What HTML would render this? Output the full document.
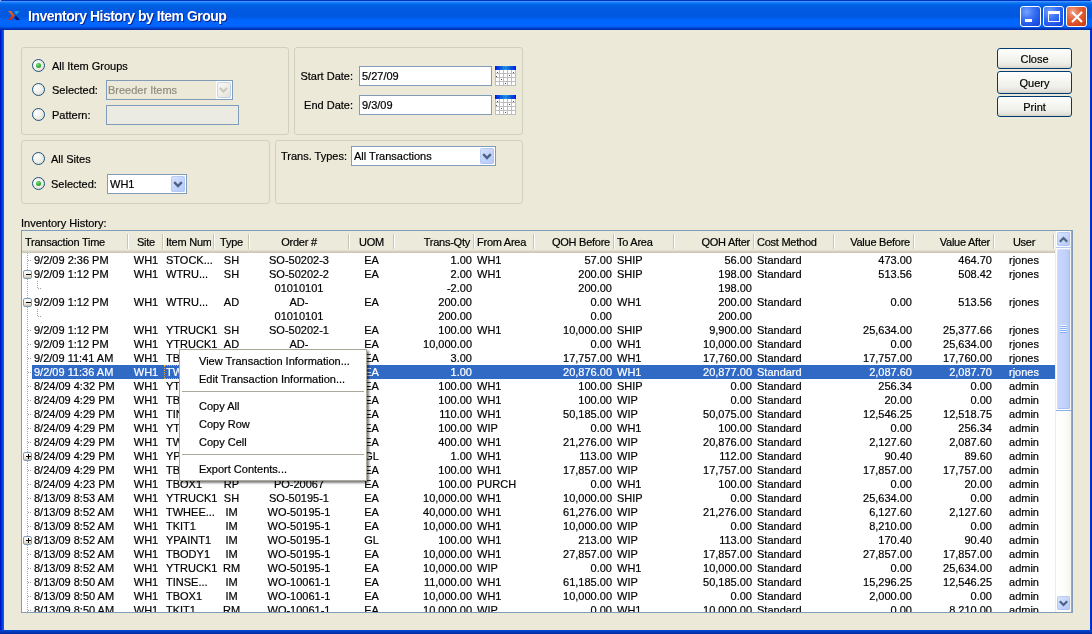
<!DOCTYPE html>
<html><head><meta charset="utf-8">
<style>
*{box-sizing:border-box}
html,body{margin:0;padding:0}
body{width:1092px;height:634px;overflow:hidden;position:relative;background:#ECE9D8;font-family:"Liberation Sans",sans-serif;font-size:11px;color:#000}
#root{-webkit-text-stroke:0.2px currentColor}
#ttl{-webkit-text-stroke:0}
.a{position:absolute}
#title{position:absolute;left:0;top:0;width:1092px;height:30px;
 background:linear-gradient(to bottom,#0032C4 0,#0032C4 1px,#3D95FF 1px,#3D95FF 2px,#2385FF 2px,#0C72F4 3px,#0062E6 5px,#005AE0 9px,#0058E0 17px,#0062F4 19px,#0066FF 21px,#0066FF 26px,#0058EC 27px,#0046D2 28px,#0034B4 29px,#002C9E 30px);
 border-radius:2px 2px 0 0}
#ttl{position:absolute;left:28px;top:6px;font-weight:bold;font-size:14px;letter-spacing:-0.5px;color:#fff;text-shadow:1px 1px 0 #0A1E8C;line-height:20px;white-space:nowrap}
.lb{position:absolute;left:0;top:30px;width:4px;height:604px;background:linear-gradient(to right,#0014C4 0,#0014C4 1px,#002ED8 1px,#002ED8 2px,#0044E6 2px,#0044E6 3px,#0A5CF0 3px,#0A5CF0 4px)}
.rb{position:absolute;left:1090px;top:30px;width:2px;height:604px;background:linear-gradient(to right,#0034DC 0,#0034DC 1px,#0026B4 1px,#0026B4 2px)}
.bb{position:absolute;left:0;top:630px;width:1092px;height:4px;background:linear-gradient(to bottom,#0046D5,#0040C8 1px,#0032B0 3px,#00218A 4px)}
.tbtn{position:absolute;top:6px;width:21px;height:21px;border:1px solid #fff;border-radius:3px;
 background:radial-gradient(circle at 30% 25%,#78A2FF 0,#3E76F6 35%,#2055E8 70%,#1744D0 100%)}
.tbtn.x{background:radial-gradient(circle at 30% 25%,#F0A88F 0,#E4673F 35%,#D84A1F 70%,#C8380E 100%)}
.grp{position:absolute;border:1px solid #D0D0BF;border-radius:3px}
.rad{position:absolute;width:13px;height:13px;border-radius:50%;border:1px solid #1C5180;background:radial-gradient(circle at 35% 35%,#FFFFFF 0,#F0F0EA 45%,#D8D6CC 100%)}
.rad.on::after{content:"";position:absolute;left:3px;top:3px;width:5px;height:5px;border-radius:50%;background:radial-gradient(circle at 40% 35%,#7EE27E 0,#2FB02F 50%,#1E901E 100%)}
.t{position:absolute;white-space:nowrap;line-height:14px}
.fld{position:absolute;border:1px solid #7F9DB9;background:#fff}
.cbtn{position:absolute;width:15px;height:17px;border-radius:2px;background:linear-gradient(135deg,#D8E3FD 0,#C6D5FC 45%,#B3CAF8 100%);box-shadow:inset 0 0 0 1px rgba(170,195,240,0.6)}
.cbtn svg{position:absolute;left:2px;top:5px}
.btn{position:absolute;left:997px;width:75px;height:22px;border:1px solid #003C74;border-radius:3px;
 background:linear-gradient(to bottom,#FFFFFF 0,#F8F8F4 30%,#F0F0EA 70%,#E3E2DA 90%,#D6D0C5 100%);text-align:center;line-height:20px;padding-top:1px}
#tbl{position:absolute;left:21px;top:230px;width:1052px;height:383px;border:1px solid #7F9DB9;background:#fff;overflow:hidden}
#hdr{position:absolute;left:22px;top:231px;width:1033px;height:22px;background:linear-gradient(to bottom,#EBEADB 0,#EBEADB 19px,#E2DECD 19px,#E2DECD 20px,#D6D2C2 20px,#D6D2C2 21px,#CBC7B8 21px,#CBC7B8 22px)}
.hc{position:absolute;top:235px;height:14px;line-height:14px;white-space:nowrap;overflow:hidden;padding:0 4px;letter-spacing:-0.25px}
.hs{position:absolute;top:234px;width:2px;height:15px;border-left:1px solid #C7C5B2;border-right:1px solid #fff}
.c{position:absolute;height:14px;line-height:14px;white-space:nowrap;overflow:hidden;padding:0 2px 0 3px}
.l{text-align:left}.r{text-align:right}.m{text-align:center}
.hc.m,.c.m{padding:0 2px}
.hc.r{text-align:right;padding:0 4px 0 2px}
.hc.l{text-align:left;padding-left:3px}
.w{color:#fff}
.sel{position:absolute;left:32px;width:1023px;height:14px;background:#316AC5}
.th{position:absolute;height:1px;background-image:linear-gradient(to right,#A0A0A0 50%,transparent 50%);background-size:2px 1px}
.tv{position:absolute;width:1px;background-image:linear-gradient(to bottom,#A0A0A0 50%,transparent 50%);background-size:1px 2px}
.eb{position:absolute;width:9px;height:9px;border:1px solid #7F9DB9;border-radius:2px;background:linear-gradient(to bottom,#fff 0,#F6F5EF 40%,#E6E2D6 75%,#C8BFA8 100%)}
#sb{position:absolute;left:1055px;top:231px;width:16px;height:381px;background:linear-gradient(to right,#EEEDE5 0,#EEEDE5 1px,#FFFFFF 1px,#FDFDFA 60%,#F5F4EE 100%)}
.sbb{position:absolute;left:1057px;width:13px;height:14px;border-radius:2px;background:linear-gradient(135deg,#DDE7FE 0,#C8D7FC 45%,#B2C8F7 100%);box-shadow:inset 0 0 0 1px rgba(160,185,235,0.5)}
#thumb{position:absolute;left:1057px;top:249px;width:13px;height:160px;border-radius:2px;background:linear-gradient(to right,#C9D6FB 0,#C6D4FB 40%,#BDD0FB 75%,#B0C6F7 100%);box-shadow:inset 1px 1px 0 #D3DEFC,inset -1px -1px 0 #A9C0F2}
#menu{position:absolute;left:179px;top:349px;width:188px;height:132px;background:#fff;border:1px solid #ACA899;box-shadow:2px 2px 2px rgba(0,0,0,0.5)}
.mi{position:absolute;left:199px;margin-top:-1px;line-height:14px;white-space:nowrap}
.msep{position:absolute;left:182px;width:182px;height:1px;background:#ACA899}
</style></head><body><div id="root" style="position:absolute;left:0;top:0;width:1092px;height:634px;will-change:transform">
<div id="title"></div>
<svg class="a" style="left:0;top:0" width="24" height="24" viewBox="0 0 24 24">
 <defs><linearGradient id="og" x1="0" y1="0" x2="0" y2="1"><stop offset="0" stop-color="#DE7226"/><stop offset="1" stop-color="#CC2012"/></linearGradient></defs>
 <path d="M8 11 L11.2 11 L15 15.5 L11.2 20 L8 20 L11.8 15.5 Z" fill="url(#og)"/>
 <path d="M15 11 L19.6 11 L16.4 14.6 L14.6 12.8 Z" fill="#1AA2DA"/>
 <path d="M14.2 17.8 L16 15.8 L20 20 L16 20 Z" fill="#06166E"/>
</svg>
<div id="ttl">Inventory History by Item Group</div>
<div class="tbtn" style="left:1020px"><div class="a" style="left:4px;top:12px;width:7px;height:3px;background:#fff"></div></div>
<div class="tbtn" style="left:1043px"><div class="a" style="left:4px;top:4px;width:12px;height:11px;border:1px solid #fff;border-top-width:3px"></div></div>
<div class="tbtn x" style="left:1066px"><svg class="a" style="left:3.5px;top:3.5px" width="12" height="12"><path d="M1 1 L11 11 M11 1 L1 11" stroke="#fff" stroke-width="2.2"/></svg></div>
<div class="lb"></div><div class="rb"></div><div class="bb"></div>

<!-- group 1 -->
<div class="grp" style="left:21px;top:47px;width:268px;height:88px"></div>
<div class="rad on" style="left:32px;top:59px"></div>
<div class="t" style="left:52px;top:59px">All Item Groups</div>
<div class="rad" style="left:32px;top:83px"></div>
<div class="t" style="left:52px;top:83px">Selected:</div>
<div class="fld" style="left:106px;top:80px;width:127px;height:20px;background:#ECE9D8"></div>
<div class="t" style="left:108px;top:83px;color:#8F8D80">Breeder Items</div>
<div class="a" style="left:216px;top:81px;width:16px;height:18px;background:#fff"></div>
<div class="cbtn" style="left:217px;top:82px;width:14px;height:16px;background:linear-gradient(135deg,#F8F8F5,#ECEBE4 60%,#E2E0D8);"><svg width="9" height="6" viewBox="0 0 9 6"><path d="M1 1 L4.5 4.5 L8 1" stroke="#C9C7BA" stroke-width="2" fill="none"/></svg></div>
<div class="rad" style="left:32px;top:108px"></div>
<div class="t" style="left:52px;top:108px">Pattern:</div>
<div class="fld" style="left:106px;top:105px;width:133px;height:20px;background:#EBEBE4"></div>

<!-- group 2 -->
<div class="grp" style="left:294px;top:47px;width:229px;height:88px"></div>
<div class="t" style="left:299px;top:69px;width:54px;text-align:right">Start Date:</div>
<div class="fld" style="left:359px;top:66px;width:133px;height:20px"></div>
<div class="t" style="left:362px;top:69px">5/27/09</div>
<svg class="a" style="left:495px;top:66px" width="21" height="20" viewBox="0 0 21 20">
 <defs><linearGradient id="cg1" x1="0" y1="0" x2="1" y2="0"><stop offset="0" stop-color="#0018E8"/><stop offset="0.5" stop-color="#1FA0E6"/><stop offset="1" stop-color="#0018E8"/></linearGradient></defs>
 <rect x="0" y="0" width="21" height="4" fill="url(#cg1)"/>
 <path d="M3 2 H18" stroke="#0A2A8A" stroke-width="1" stroke-dasharray="2 1" opacity="0.5"/>
 <rect x="0" y="4" width="21" height="16" fill="#fff"/>
 <g stroke="#BDBDBD" stroke-width="1">
  <path d="M0.5 4 V20 M4.5 4 V20 M8.5 4 V20 M12.5 4 V20 M16.5 4 V20 M20.5 4 V20"/>
  <path d="M0 7.5 H21 M0 11.5 H21 M0 15.5 H21 M0 19.5 H21"/>
 </g>
 <g fill="#555"><rect x="2" y="6" width="1" height="1"/><rect x="18" y="6" width="1" height="1"/><rect x="1" y="10" width="1" height="1"/><rect x="14" y="9" width="1" height="1"/><rect x="6" y="13" width="1" height="1"/><rect x="10" y="17" width="1" height="1"/></g>
</svg>
<div class="t" style="left:299px;top:98px;width:54px;text-align:right">End Date:</div>
<div class="fld" style="left:359px;top:95px;width:133px;height:20px"></div>
<div class="t" style="left:362px;top:98px">9/3/09</div>
<svg class="a" style="left:495px;top:95px" width="21" height="20" viewBox="0 0 21 20">
 <defs><linearGradient id="cg2" x1="0" y1="0" x2="1" y2="0"><stop offset="0" stop-color="#0018E8"/><stop offset="0.5" stop-color="#1FA0E6"/><stop offset="1" stop-color="#0018E8"/></linearGradient></defs>
 <rect x="0" y="0" width="21" height="4" fill="url(#cg2)"/>
 <path d="M3 2 H18" stroke="#0A2A8A" stroke-width="1" stroke-dasharray="2 1" opacity="0.5"/>
 <rect x="0" y="4" width="21" height="16" fill="#fff"/>
 <g stroke="#BDBDBD" stroke-width="1">
  <path d="M0.5 4 V20 M4.5 4 V20 M8.5 4 V20 M12.5 4 V20 M16.5 4 V20 M20.5 4 V20"/>
  <path d="M0 7.5 H21 M0 11.5 H21 M0 15.5 H21 M0 19.5 H21"/>
 </g>
 <g fill="#555"><rect x="2" y="6" width="1" height="1"/><rect x="18" y="6" width="1" height="1"/><rect x="1" y="10" width="1" height="1"/><rect x="14" y="9" width="1" height="1"/><rect x="6" y="13" width="1" height="1"/><rect x="10" y="17" width="1" height="1"/></g>
</svg>

<!-- group 3 -->
<div class="grp" style="left:21px;top:140px;width:249px;height:64px"></div>
<div class="rad" style="left:32px;top:152px"></div>
<div class="t" style="left:51px;top:152px">All Sites</div>
<div class="rad on" style="left:32px;top:177px"></div>
<div class="t" style="left:51px;top:177px">Selected:</div>
<div class="fld" style="left:107px;top:174px;width:80px;height:20px"></div>
<div class="t" style="left:110px;top:177px">WH1</div>
<div class="cbtn" style="left:171px;top:176px;width:14px;height:16px"><svg width="10" height="7" viewBox="0 0 10 7"><path d="M1.2 1.2 L5 5 L8.8 1.2" stroke="#4D6185" stroke-width="2.4" fill="none"/></svg></div>

<!-- group 4 -->
<div class="grp" style="left:275px;top:140px;width:248px;height:64px"></div>
<div class="t" style="left:281px;top:149px">Trans. Types:</div>
<div class="fld" style="left:351px;top:146px;width:145px;height:20px"></div>
<div class="t" style="left:354px;top:149px">All Transactions</div>
<div class="cbtn" style="left:480px;top:148px;width:14px;height:16px"><svg width="10" height="7" viewBox="0 0 10 7"><path d="M1.2 1.2 L5 5 L8.8 1.2" stroke="#4D6185" stroke-width="2.4" fill="none"/></svg></div>

<!-- buttons -->
<div class="btn" style="top:48px;height:21px;line-height:19px">Close</div>
<div class="btn" style="top:71px;height:23px;line-height:21px">Query</div>
<div class="btn" style="top:96px;height:21px;line-height:19px">Print</div>

<div class="t" style="left:21px;top:216px">Inventory History:</div>

<div id="tbl"></div>
<div id="hdr"></div>
<div class="hc l" style="left:22px;width:107px">Transaction Time</div>
<div class="hs" style="left:127px"></div>
<div class="hc m" style="left:129px;width:34px">Site</div>
<div class="hs" style="left:162px"></div>
<div class="hc l" style="left:163px;width:48px">Item Num</div>
<div class="hs" style="left:213px"></div>
<div class="hc m" style="left:214px;width:35px">Type</div>
<div class="hs" style="left:248px"></div>
<div class="hc m" style="left:249px;width:100px">Order #</div>
<div class="hs" style="left:348px"></div>
<div class="hc m" style="left:349px;width:45px">UOM</div>
<div class="hs" style="left:393px"></div>
<div class="hc r" style="left:394px;width:80px">Trans-Qty</div>
<div class="hs" style="left:473px"></div>
<div class="hc l" style="left:474px;width:60px">From Area</div>
<div class="hs" style="left:533px"></div>
<div class="hc r" style="left:534px;width:80px">QOH Before</div>
<div class="hs" style="left:613px"></div>
<div class="hc l" style="left:614px;width:60px">To Area</div>
<div class="hs" style="left:673px"></div>
<div class="hc r" style="left:674px;width:80px">QOH After</div>
<div class="hs" style="left:753px"></div>
<div class="hc l" style="left:754px;width:80px">Cost Method</div>
<div class="hs" style="left:833px"></div>
<div class="hc r" style="left:834px;width:80px">Value Before</div>
<div class="hs" style="left:913px"></div>
<div class="hc r" style="left:914px;width:80px">Value After</div>
<div class="hs" style="left:993px"></div>
<div class="hc m" style="left:994px;width:60px">User</div>
<div class="hs" style="left:1053px"></div>
<div class="a" style="left:0;top:0;width:1092px;height:612px;overflow:hidden">
<div class="tv" style="left:27px;top:253px;height:359px"></div>
<div class="c l" style="left:34px;top:253px;width:95px;padding:0">9/2/09 2:36 PM</div>
<div class="c m" style="left:129px;top:253px;width:34px">WH1</div>
<div class="c l" style="left:163px;top:253px;width:51px;padding-right:0;overflow:visible">STOCK...</div>
<div class="c m" style="left:214px;top:253px;width:35px">SH</div>
<div class="c m" style="left:249px;top:253px;width:100px">SO-50202-3</div>
<div class="c m" style="left:349px;top:253px;width:45px">EA</div>
<div class="c r" style="left:394px;top:253px;width:80px">1.00</div>
<div class="c l" style="left:474px;top:253px;width:60px">WH1</div>
<div class="c r" style="left:534px;top:253px;width:80px">57.00</div>
<div class="c l" style="left:614px;top:253px;width:60px">SHIP</div>
<div class="c r" style="left:674px;top:253px;width:80px">56.00</div>
<div class="c l" style="left:754px;top:253px;width:80px">Standard</div>
<div class="c r" style="left:834px;top:253px;width:80px">473.00</div>
<div class="c r" style="left:914px;top:253px;width:80px">464.70</div>
<div class="c m" style="left:994px;top:253px;width:60px">rjones</div>
<div class="th" style="left:28px;top:260px;width:4px"></div>
<div class="c l" style="left:34px;top:267px;width:95px;padding:0">9/2/09 1:12 PM</div>
<div class="c m" style="left:129px;top:267px;width:34px">WH1</div>
<div class="c l" style="left:163px;top:267px;width:51px;padding-right:0;overflow:visible">WTRU...</div>
<div class="c m" style="left:214px;top:267px;width:35px">SH</div>
<div class="c m" style="left:249px;top:267px;width:100px">SO-50202-2</div>
<div class="c m" style="left:349px;top:267px;width:45px">EA</div>
<div class="c r" style="left:394px;top:267px;width:80px">2.00</div>
<div class="c l" style="left:474px;top:267px;width:60px">WH1</div>
<div class="c r" style="left:534px;top:267px;width:80px">200.00</div>
<div class="c l" style="left:614px;top:267px;width:60px">SHIP</div>
<div class="c r" style="left:674px;top:267px;width:80px">198.00</div>
<div class="c l" style="left:754px;top:267px;width:80px">Standard</div>
<div class="c r" style="left:834px;top:267px;width:80px">513.56</div>
<div class="c r" style="left:914px;top:267px;width:80px">508.42</div>
<div class="c m" style="left:994px;top:267px;width:60px">rjones</div>
<div class="eb" style="left:23px;top:270px"><div class="a" style="left:2px;top:3px;width:5px;height:1px;background:#000"></div></div>
<div class="c m" style="left:249px;top:281px;width:100px">01010101</div>
<div class="c r" style="left:394px;top:281px;width:80px">-2.00</div>
<div class="c r" style="left:534px;top:281px;width:80px">200.00</div>
<div class="c r" style="left:674px;top:281px;width:80px">198.00</div>
<div class="tv" style="left:37px;top:281px;height:7px"></div>
<div class="th" style="left:38px;top:288px;width:4px"></div>
<div class="c l" style="left:34px;top:295px;width:95px;padding:0">9/2/09 1:12 PM</div>
<div class="c m" style="left:129px;top:295px;width:34px">WH1</div>
<div class="c l" style="left:163px;top:295px;width:51px;padding-right:0;overflow:visible">WTRU...</div>
<div class="c m" style="left:214px;top:295px;width:35px">AD</div>
<div class="c m" style="left:249px;top:295px;width:100px">AD-</div>
<div class="c m" style="left:349px;top:295px;width:45px">EA</div>
<div class="c r" style="left:394px;top:295px;width:80px">200.00</div>
<div class="c r" style="left:534px;top:295px;width:80px">0.00</div>
<div class="c l" style="left:614px;top:295px;width:60px">WH1</div>
<div class="c r" style="left:674px;top:295px;width:80px">200.00</div>
<div class="c l" style="left:754px;top:295px;width:80px">Standard</div>
<div class="c r" style="left:834px;top:295px;width:80px">0.00</div>
<div class="c r" style="left:914px;top:295px;width:80px">513.56</div>
<div class="c m" style="left:994px;top:295px;width:60px">rjones</div>
<div class="eb" style="left:23px;top:298px"><div class="a" style="left:2px;top:3px;width:5px;height:1px;background:#000"></div></div>
<div class="c m" style="left:249px;top:309px;width:100px">01010101</div>
<div class="c r" style="left:394px;top:309px;width:80px">200.00</div>
<div class="c r" style="left:534px;top:309px;width:80px">0.00</div>
<div class="c r" style="left:674px;top:309px;width:80px">200.00</div>
<div class="tv" style="left:37px;top:309px;height:7px"></div>
<div class="th" style="left:38px;top:316px;width:4px"></div>
<div class="c l" style="left:34px;top:323px;width:95px;padding:0">9/2/09 1:12 PM</div>
<div class="c m" style="left:129px;top:323px;width:34px">WH1</div>
<div class="c l" style="left:163px;top:323px;width:51px;padding-right:0;overflow:visible">YTRUCK1</div>
<div class="c m" style="left:214px;top:323px;width:35px">SH</div>
<div class="c m" style="left:249px;top:323px;width:100px">SO-50202-1</div>
<div class="c m" style="left:349px;top:323px;width:45px">EA</div>
<div class="c r" style="left:394px;top:323px;width:80px">100.00</div>
<div class="c l" style="left:474px;top:323px;width:60px">WH1</div>
<div class="c r" style="left:534px;top:323px;width:80px">10,000.00</div>
<div class="c l" style="left:614px;top:323px;width:60px">SHIP</div>
<div class="c r" style="left:674px;top:323px;width:80px">9,900.00</div>
<div class="c l" style="left:754px;top:323px;width:80px">Standard</div>
<div class="c r" style="left:834px;top:323px;width:80px">25,634.00</div>
<div class="c r" style="left:914px;top:323px;width:80px">25,377.66</div>
<div class="c m" style="left:994px;top:323px;width:60px">rjones</div>
<div class="th" style="left:28px;top:330px;width:4px"></div>
<div class="c l" style="left:34px;top:337px;width:95px;padding:0">9/2/09 1:12 PM</div>
<div class="c m" style="left:129px;top:337px;width:34px">WH1</div>
<div class="c l" style="left:163px;top:337px;width:51px;padding-right:0;overflow:visible">YTRUCK1</div>
<div class="c m" style="left:214px;top:337px;width:35px">AD</div>
<div class="c m" style="left:249px;top:337px;width:100px">AD-</div>
<div class="c m" style="left:349px;top:337px;width:45px">EA</div>
<div class="c r" style="left:394px;top:337px;width:80px">10,000.00</div>
<div class="c r" style="left:534px;top:337px;width:80px">0.00</div>
<div class="c l" style="left:614px;top:337px;width:60px">WH1</div>
<div class="c r" style="left:674px;top:337px;width:80px">10,000.00</div>
<div class="c l" style="left:754px;top:337px;width:80px">Standard</div>
<div class="c r" style="left:834px;top:337px;width:80px">0.00</div>
<div class="c r" style="left:914px;top:337px;width:80px">25,634.00</div>
<div class="c m" style="left:994px;top:337px;width:60px">rjones</div>
<div class="th" style="left:28px;top:344px;width:4px"></div>
<div class="c l" style="left:34px;top:351px;width:95px;padding:0">9/2/09 11:41 AM</div>
<div class="c m" style="left:129px;top:351px;width:34px">WH1</div>
<div class="c l" style="left:163px;top:351px;width:51px;padding-right:0;overflow:visible">TBOX1</div>
<div class="c m" style="left:214px;top:351px;width:35px">AD</div>
<div class="c m" style="left:249px;top:351px;width:100px">AD-</div>
<div class="c m" style="left:349px;top:351px;width:45px">EA</div>
<div class="c r" style="left:394px;top:351px;width:80px">3.00</div>
<div class="c r" style="left:534px;top:351px;width:80px">17,757.00</div>
<div class="c l" style="left:614px;top:351px;width:60px">WH1</div>
<div class="c r" style="left:674px;top:351px;width:80px">17,760.00</div>
<div class="c l" style="left:754px;top:351px;width:80px">Standard</div>
<div class="c r" style="left:834px;top:351px;width:80px">17,757.00</div>
<div class="c r" style="left:914px;top:351px;width:80px">17,760.00</div>
<div class="c m" style="left:994px;top:351px;width:60px">rjones</div>
<div class="th" style="left:28px;top:358px;width:4px"></div>
<div class="sel" style="top:365px"></div>
<div class="c l w" style="left:34px;top:365px;width:95px;padding:0">9/2/09 11:36 AM</div>
<div class="c m w" style="left:129px;top:365px;width:34px">WH1</div>
<div class="c l w" style="left:163px;top:365px;width:51px;padding-right:0;overflow:visible">TWHEE...</div>
<div class="c m w" style="left:214px;top:365px;width:35px">AD</div>
<div class="c m w" style="left:249px;top:365px;width:100px">AD-</div>
<div class="c m w" style="left:349px;top:365px;width:45px">EA</div>
<div class="c r w" style="left:394px;top:365px;width:80px">1.00</div>
<div class="c r w" style="left:534px;top:365px;width:80px">20,876.00</div>
<div class="c l w" style="left:614px;top:365px;width:60px">WH1</div>
<div class="c r w" style="left:674px;top:365px;width:80px">20,877.00</div>
<div class="c l w" style="left:754px;top:365px;width:80px">Standard</div>
<div class="c r w" style="left:834px;top:365px;width:80px">2,087.60</div>
<div class="c r w" style="left:914px;top:365px;width:80px">2,087.70</div>
<div class="c m w" style="left:994px;top:365px;width:60px">rjones</div>
<div class="th" style="left:28px;top:372px;width:4px"></div>
<div class="c l" style="left:34px;top:379px;width:95px;padding:0">8/24/09 4:32 PM</div>
<div class="c m" style="left:129px;top:379px;width:34px">WH1</div>
<div class="c l" style="left:163px;top:379px;width:51px;padding-right:0;overflow:visible">YTRUCK1</div>
<div class="c m" style="left:214px;top:379px;width:35px">SH</div>
<div class="c m" style="left:249px;top:379px;width:100px">SO-50196-1</div>
<div class="c m" style="left:349px;top:379px;width:45px">EA</div>
<div class="c r" style="left:394px;top:379px;width:80px">100.00</div>
<div class="c l" style="left:474px;top:379px;width:60px">WH1</div>
<div class="c r" style="left:534px;top:379px;width:80px">100.00</div>
<div class="c l" style="left:614px;top:379px;width:60px">SHIP</div>
<div class="c r" style="left:674px;top:379px;width:80px">0.00</div>
<div class="c l" style="left:754px;top:379px;width:80px">Standard</div>
<div class="c r" style="left:834px;top:379px;width:80px">256.34</div>
<div class="c r" style="left:914px;top:379px;width:80px">0.00</div>
<div class="c m" style="left:994px;top:379px;width:60px">admin</div>
<div class="th" style="left:28px;top:386px;width:4px"></div>
<div class="c l" style="left:34px;top:393px;width:95px;padding:0">8/24/09 4:29 PM</div>
<div class="c m" style="left:129px;top:393px;width:34px">WH1</div>
<div class="c l" style="left:163px;top:393px;width:51px;padding-right:0;overflow:visible">TBOX1</div>
<div class="c m" style="left:214px;top:393px;width:35px">IM</div>
<div class="c m" style="left:249px;top:393px;width:100px">WO-50196-1</div>
<div class="c m" style="left:349px;top:393px;width:45px">EA</div>
<div class="c r" style="left:394px;top:393px;width:80px">100.00</div>
<div class="c l" style="left:474px;top:393px;width:60px">WH1</div>
<div class="c r" style="left:534px;top:393px;width:80px">100.00</div>
<div class="c l" style="left:614px;top:393px;width:60px">WIP</div>
<div class="c r" style="left:674px;top:393px;width:80px">0.00</div>
<div class="c l" style="left:754px;top:393px;width:80px">Standard</div>
<div class="c r" style="left:834px;top:393px;width:80px">20.00</div>
<div class="c r" style="left:914px;top:393px;width:80px">0.00</div>
<div class="c m" style="left:994px;top:393px;width:60px">admin</div>
<div class="th" style="left:28px;top:400px;width:4px"></div>
<div class="c l" style="left:34px;top:407px;width:95px;padding:0">8/24/09 4:29 PM</div>
<div class="c m" style="left:129px;top:407px;width:34px">WH1</div>
<div class="c l" style="left:163px;top:407px;width:51px;padding-right:0;overflow:visible">TINSE...</div>
<div class="c m" style="left:214px;top:407px;width:35px">IM</div>
<div class="c m" style="left:249px;top:407px;width:100px">WO-50196-1</div>
<div class="c m" style="left:349px;top:407px;width:45px">EA</div>
<div class="c r" style="left:394px;top:407px;width:80px">110.00</div>
<div class="c l" style="left:474px;top:407px;width:60px">WH1</div>
<div class="c r" style="left:534px;top:407px;width:80px">50,185.00</div>
<div class="c l" style="left:614px;top:407px;width:60px">WIP</div>
<div class="c r" style="left:674px;top:407px;width:80px">50,075.00</div>
<div class="c l" style="left:754px;top:407px;width:80px">Standard</div>
<div class="c r" style="left:834px;top:407px;width:80px">12,546.25</div>
<div class="c r" style="left:914px;top:407px;width:80px">12,518.75</div>
<div class="c m" style="left:994px;top:407px;width:60px">admin</div>
<div class="th" style="left:28px;top:414px;width:4px"></div>
<div class="c l" style="left:34px;top:421px;width:95px;padding:0">8/24/09 4:29 PM</div>
<div class="c m" style="left:129px;top:421px;width:34px">WH1</div>
<div class="c l" style="left:163px;top:421px;width:51px;padding-right:0;overflow:visible">YTRUCK1</div>
<div class="c m" style="left:214px;top:421px;width:35px">RM</div>
<div class="c m" style="left:249px;top:421px;width:100px">WO-50196-1</div>
<div class="c m" style="left:349px;top:421px;width:45px">EA</div>
<div class="c r" style="left:394px;top:421px;width:80px">100.00</div>
<div class="c l" style="left:474px;top:421px;width:60px">WIP</div>
<div class="c r" style="left:534px;top:421px;width:80px">0.00</div>
<div class="c l" style="left:614px;top:421px;width:60px">WH1</div>
<div class="c r" style="left:674px;top:421px;width:80px">100.00</div>
<div class="c l" style="left:754px;top:421px;width:80px">Standard</div>
<div class="c r" style="left:834px;top:421px;width:80px">0.00</div>
<div class="c r" style="left:914px;top:421px;width:80px">256.34</div>
<div class="c m" style="left:994px;top:421px;width:60px">admin</div>
<div class="th" style="left:28px;top:428px;width:4px"></div>
<div class="c l" style="left:34px;top:435px;width:95px;padding:0">8/24/09 4:29 PM</div>
<div class="c m" style="left:129px;top:435px;width:34px">WH1</div>
<div class="c l" style="left:163px;top:435px;width:51px;padding-right:0;overflow:visible">TWHEE...</div>
<div class="c m" style="left:214px;top:435px;width:35px">IM</div>
<div class="c m" style="left:249px;top:435px;width:100px">WO-50196-1</div>
<div class="c m" style="left:349px;top:435px;width:45px">EA</div>
<div class="c r" style="left:394px;top:435px;width:80px">400.00</div>
<div class="c l" style="left:474px;top:435px;width:60px">WH1</div>
<div class="c r" style="left:534px;top:435px;width:80px">21,276.00</div>
<div class="c l" style="left:614px;top:435px;width:60px">WIP</div>
<div class="c r" style="left:674px;top:435px;width:80px">20,876.00</div>
<div class="c l" style="left:754px;top:435px;width:80px">Standard</div>
<div class="c r" style="left:834px;top:435px;width:80px">2,127.60</div>
<div class="c r" style="left:914px;top:435px;width:80px">2,087.60</div>
<div class="c m" style="left:994px;top:435px;width:60px">admin</div>
<div class="th" style="left:28px;top:442px;width:4px"></div>
<div class="c l" style="left:34px;top:449px;width:95px;padding:0">8/24/09 4:29 PM</div>
<div class="c m" style="left:129px;top:449px;width:34px">WH1</div>
<div class="c l" style="left:163px;top:449px;width:51px;padding-right:0;overflow:visible">YPAINT1</div>
<div class="c m" style="left:214px;top:449px;width:35px">IM</div>
<div class="c m" style="left:249px;top:449px;width:100px">WO-50196-1</div>
<div class="c m" style="left:349px;top:449px;width:45px">GL</div>
<div class="c r" style="left:394px;top:449px;width:80px">1.00</div>
<div class="c l" style="left:474px;top:449px;width:60px">WH1</div>
<div class="c r" style="left:534px;top:449px;width:80px">113.00</div>
<div class="c l" style="left:614px;top:449px;width:60px">WIP</div>
<div class="c r" style="left:674px;top:449px;width:80px">112.00</div>
<div class="c l" style="left:754px;top:449px;width:80px">Standard</div>
<div class="c r" style="left:834px;top:449px;width:80px">90.40</div>
<div class="c r" style="left:914px;top:449px;width:80px">89.60</div>
<div class="c m" style="left:994px;top:449px;width:60px">admin</div>
<div class="eb" style="left:23px;top:452px"><div class="a" style="left:2px;top:3px;width:5px;height:1px;background:#000"></div><div class="a" style="left:4px;top:1px;width:1px;height:5px;background:#000"></div></div>
<div class="c l" style="left:34px;top:463px;width:95px;padding:0">8/24/09 4:29 PM</div>
<div class="c m" style="left:129px;top:463px;width:34px">WH1</div>
<div class="c l" style="left:163px;top:463px;width:51px;padding-right:0;overflow:visible">TBODY1</div>
<div class="c m" style="left:214px;top:463px;width:35px">IM</div>
<div class="c m" style="left:249px;top:463px;width:100px">WO-50196-1</div>
<div class="c m" style="left:349px;top:463px;width:45px">EA</div>
<div class="c r" style="left:394px;top:463px;width:80px">100.00</div>
<div class="c l" style="left:474px;top:463px;width:60px">WH1</div>
<div class="c r" style="left:534px;top:463px;width:80px">17,857.00</div>
<div class="c l" style="left:614px;top:463px;width:60px">WIP</div>
<div class="c r" style="left:674px;top:463px;width:80px">17,757.00</div>
<div class="c l" style="left:754px;top:463px;width:80px">Standard</div>
<div class="c r" style="left:834px;top:463px;width:80px">17,857.00</div>
<div class="c r" style="left:914px;top:463px;width:80px">17,757.00</div>
<div class="c m" style="left:994px;top:463px;width:60px">admin</div>
<div class="th" style="left:28px;top:470px;width:4px"></div>
<div class="c l" style="left:34px;top:477px;width:95px;padding:0">8/24/09 4:23 PM</div>
<div class="c m" style="left:129px;top:477px;width:34px">WH1</div>
<div class="c l" style="left:163px;top:477px;width:51px;padding-right:0;overflow:visible">TBOX1</div>
<div class="c m" style="left:214px;top:477px;width:35px">RP</div>
<div class="c m" style="left:249px;top:477px;width:100px">PO-20067</div>
<div class="c m" style="left:349px;top:477px;width:45px">EA</div>
<div class="c r" style="left:394px;top:477px;width:80px">100.00</div>
<div class="c l" style="left:474px;top:477px;width:60px">PURCH</div>
<div class="c r" style="left:534px;top:477px;width:80px">0.00</div>
<div class="c l" style="left:614px;top:477px;width:60px">WH1</div>
<div class="c r" style="left:674px;top:477px;width:80px">100.00</div>
<div class="c l" style="left:754px;top:477px;width:80px">Standard</div>
<div class="c r" style="left:834px;top:477px;width:80px">0.00</div>
<div class="c r" style="left:914px;top:477px;width:80px">20.00</div>
<div class="c m" style="left:994px;top:477px;width:60px">admin</div>
<div class="th" style="left:28px;top:484px;width:4px"></div>
<div class="c l" style="left:34px;top:491px;width:95px;padding:0">8/13/09 8:53 AM</div>
<div class="c m" style="left:129px;top:491px;width:34px">WH1</div>
<div class="c l" style="left:163px;top:491px;width:51px;padding-right:0;overflow:visible">YTRUCK1</div>
<div class="c m" style="left:214px;top:491px;width:35px">SH</div>
<div class="c m" style="left:249px;top:491px;width:100px">SO-50195-1</div>
<div class="c m" style="left:349px;top:491px;width:45px">EA</div>
<div class="c r" style="left:394px;top:491px;width:80px">10,000.00</div>
<div class="c l" style="left:474px;top:491px;width:60px">WH1</div>
<div class="c r" style="left:534px;top:491px;width:80px">10,000.00</div>
<div class="c l" style="left:614px;top:491px;width:60px">SHIP</div>
<div class="c r" style="left:674px;top:491px;width:80px">0.00</div>
<div class="c l" style="left:754px;top:491px;width:80px">Standard</div>
<div class="c r" style="left:834px;top:491px;width:80px">25,634.00</div>
<div class="c r" style="left:914px;top:491px;width:80px">0.00</div>
<div class="c m" style="left:994px;top:491px;width:60px">admin</div>
<div class="th" style="left:28px;top:498px;width:4px"></div>
<div class="c l" style="left:34px;top:505px;width:95px;padding:0">8/13/09 8:52 AM</div>
<div class="c m" style="left:129px;top:505px;width:34px">WH1</div>
<div class="c l" style="left:163px;top:505px;width:51px;padding-right:0;overflow:visible">TWHEE...</div>
<div class="c m" style="left:214px;top:505px;width:35px">IM</div>
<div class="c m" style="left:249px;top:505px;width:100px">WO-50195-1</div>
<div class="c m" style="left:349px;top:505px;width:45px">EA</div>
<div class="c r" style="left:394px;top:505px;width:80px">40,000.00</div>
<div class="c l" style="left:474px;top:505px;width:60px">WH1</div>
<div class="c r" style="left:534px;top:505px;width:80px">61,276.00</div>
<div class="c l" style="left:614px;top:505px;width:60px">WIP</div>
<div class="c r" style="left:674px;top:505px;width:80px">21,276.00</div>
<div class="c l" style="left:754px;top:505px;width:80px">Standard</div>
<div class="c r" style="left:834px;top:505px;width:80px">6,127.60</div>
<div class="c r" style="left:914px;top:505px;width:80px">2,127.60</div>
<div class="c m" style="left:994px;top:505px;width:60px">admin</div>
<div class="th" style="left:28px;top:512px;width:4px"></div>
<div class="c l" style="left:34px;top:519px;width:95px;padding:0">8/13/09 8:52 AM</div>
<div class="c m" style="left:129px;top:519px;width:34px">WH1</div>
<div class="c l" style="left:163px;top:519px;width:51px;padding-right:0;overflow:visible">TKIT1</div>
<div class="c m" style="left:214px;top:519px;width:35px">IM</div>
<div class="c m" style="left:249px;top:519px;width:100px">WO-50195-1</div>
<div class="c m" style="left:349px;top:519px;width:45px">EA</div>
<div class="c r" style="left:394px;top:519px;width:80px">10,000.00</div>
<div class="c l" style="left:474px;top:519px;width:60px">WH1</div>
<div class="c r" style="left:534px;top:519px;width:80px">10,000.00</div>
<div class="c l" style="left:614px;top:519px;width:60px">WIP</div>
<div class="c r" style="left:674px;top:519px;width:80px">0.00</div>
<div class="c l" style="left:754px;top:519px;width:80px">Standard</div>
<div class="c r" style="left:834px;top:519px;width:80px">8,210.00</div>
<div class="c r" style="left:914px;top:519px;width:80px">0.00</div>
<div class="c m" style="left:994px;top:519px;width:60px">admin</div>
<div class="th" style="left:28px;top:526px;width:4px"></div>
<div class="c l" style="left:34px;top:533px;width:95px;padding:0">8/13/09 8:52 AM</div>
<div class="c m" style="left:129px;top:533px;width:34px">WH1</div>
<div class="c l" style="left:163px;top:533px;width:51px;padding-right:0;overflow:visible">YPAINT1</div>
<div class="c m" style="left:214px;top:533px;width:35px">IM</div>
<div class="c m" style="left:249px;top:533px;width:100px">WO-50195-1</div>
<div class="c m" style="left:349px;top:533px;width:45px">GL</div>
<div class="c r" style="left:394px;top:533px;width:80px">100.00</div>
<div class="c l" style="left:474px;top:533px;width:60px">WH1</div>
<div class="c r" style="left:534px;top:533px;width:80px">213.00</div>
<div class="c l" style="left:614px;top:533px;width:60px">WIP</div>
<div class="c r" style="left:674px;top:533px;width:80px">113.00</div>
<div class="c l" style="left:754px;top:533px;width:80px">Standard</div>
<div class="c r" style="left:834px;top:533px;width:80px">170.40</div>
<div class="c r" style="left:914px;top:533px;width:80px">90.40</div>
<div class="c m" style="left:994px;top:533px;width:60px">admin</div>
<div class="eb" style="left:23px;top:536px"><div class="a" style="left:2px;top:3px;width:5px;height:1px;background:#000"></div><div class="a" style="left:4px;top:1px;width:1px;height:5px;background:#000"></div></div>
<div class="c l" style="left:34px;top:547px;width:95px;padding:0">8/13/09 8:52 AM</div>
<div class="c m" style="left:129px;top:547px;width:34px">WH1</div>
<div class="c l" style="left:163px;top:547px;width:51px;padding-right:0;overflow:visible">TBODY1</div>
<div class="c m" style="left:214px;top:547px;width:35px">IM</div>
<div class="c m" style="left:249px;top:547px;width:100px">WO-50195-1</div>
<div class="c m" style="left:349px;top:547px;width:45px">EA</div>
<div class="c r" style="left:394px;top:547px;width:80px">10,000.00</div>
<div class="c l" style="left:474px;top:547px;width:60px">WH1</div>
<div class="c r" style="left:534px;top:547px;width:80px">27,857.00</div>
<div class="c l" style="left:614px;top:547px;width:60px">WIP</div>
<div class="c r" style="left:674px;top:547px;width:80px">17,857.00</div>
<div class="c l" style="left:754px;top:547px;width:80px">Standard</div>
<div class="c r" style="left:834px;top:547px;width:80px">27,857.00</div>
<div class="c r" style="left:914px;top:547px;width:80px">17,857.00</div>
<div class="c m" style="left:994px;top:547px;width:60px">admin</div>
<div class="th" style="left:28px;top:554px;width:4px"></div>
<div class="c l" style="left:34px;top:561px;width:95px;padding:0">8/13/09 8:52 AM</div>
<div class="c m" style="left:129px;top:561px;width:34px">WH1</div>
<div class="c l" style="left:163px;top:561px;width:51px;padding-right:0;overflow:visible">YTRUCK1</div>
<div class="c m" style="left:214px;top:561px;width:35px">RM</div>
<div class="c m" style="left:249px;top:561px;width:100px">WO-50195-1</div>
<div class="c m" style="left:349px;top:561px;width:45px">EA</div>
<div class="c r" style="left:394px;top:561px;width:80px">10,000.00</div>
<div class="c l" style="left:474px;top:561px;width:60px">WIP</div>
<div class="c r" style="left:534px;top:561px;width:80px">0.00</div>
<div class="c l" style="left:614px;top:561px;width:60px">WH1</div>
<div class="c r" style="left:674px;top:561px;width:80px">10,000.00</div>
<div class="c l" style="left:754px;top:561px;width:80px">Standard</div>
<div class="c r" style="left:834px;top:561px;width:80px">0.00</div>
<div class="c r" style="left:914px;top:561px;width:80px">25,634.00</div>
<div class="c m" style="left:994px;top:561px;width:60px">admin</div>
<div class="th" style="left:28px;top:568px;width:4px"></div>
<div class="c l" style="left:34px;top:575px;width:95px;padding:0">8/13/09 8:50 AM</div>
<div class="c m" style="left:129px;top:575px;width:34px">WH1</div>
<div class="c l" style="left:163px;top:575px;width:51px;padding-right:0;overflow:visible">TINSE...</div>
<div class="c m" style="left:214px;top:575px;width:35px">IM</div>
<div class="c m" style="left:249px;top:575px;width:100px">WO-10061-1</div>
<div class="c m" style="left:349px;top:575px;width:45px">EA</div>
<div class="c r" style="left:394px;top:575px;width:80px">11,000.00</div>
<div class="c l" style="left:474px;top:575px;width:60px">WH1</div>
<div class="c r" style="left:534px;top:575px;width:80px">61,185.00</div>
<div class="c l" style="left:614px;top:575px;width:60px">WIP</div>
<div class="c r" style="left:674px;top:575px;width:80px">50,185.00</div>
<div class="c l" style="left:754px;top:575px;width:80px">Standard</div>
<div class="c r" style="left:834px;top:575px;width:80px">15,296.25</div>
<div class="c r" style="left:914px;top:575px;width:80px">12,546.25</div>
<div class="c m" style="left:994px;top:575px;width:60px">admin</div>
<div class="th" style="left:28px;top:582px;width:4px"></div>
<div class="c l" style="left:34px;top:589px;width:95px;padding:0">8/13/09 8:50 AM</div>
<div class="c m" style="left:129px;top:589px;width:34px">WH1</div>
<div class="c l" style="left:163px;top:589px;width:51px;padding-right:0;overflow:visible">TBOX1</div>
<div class="c m" style="left:214px;top:589px;width:35px">IM</div>
<div class="c m" style="left:249px;top:589px;width:100px">WO-10061-1</div>
<div class="c m" style="left:349px;top:589px;width:45px">EA</div>
<div class="c r" style="left:394px;top:589px;width:80px">10,000.00</div>
<div class="c l" style="left:474px;top:589px;width:60px">WH1</div>
<div class="c r" style="left:534px;top:589px;width:80px">10,000.00</div>
<div class="c l" style="left:614px;top:589px;width:60px">WIP</div>
<div class="c r" style="left:674px;top:589px;width:80px">0.00</div>
<div class="c l" style="left:754px;top:589px;width:80px">Standard</div>
<div class="c r" style="left:834px;top:589px;width:80px">2,000.00</div>
<div class="c r" style="left:914px;top:589px;width:80px">0.00</div>
<div class="c m" style="left:994px;top:589px;width:60px">admin</div>
<div class="th" style="left:28px;top:596px;width:4px"></div>
<div class="c l" style="left:34px;top:603px;width:95px;padding:0">8/13/09 8:50 AM</div>
<div class="c m" style="left:129px;top:603px;width:34px">WH1</div>
<div class="c l" style="left:163px;top:603px;width:51px;padding-right:0;overflow:visible">TKIT1</div>
<div class="c m" style="left:214px;top:603px;width:35px">RM</div>
<div class="c m" style="left:249px;top:603px;width:100px">WO-10061-1</div>
<div class="c m" style="left:349px;top:603px;width:45px">EA</div>
<div class="c r" style="left:394px;top:603px;width:80px">10,000.00</div>
<div class="c l" style="left:474px;top:603px;width:60px">WIP</div>
<div class="c r" style="left:534px;top:603px;width:80px">0.00</div>
<div class="c l" style="left:614px;top:603px;width:60px">WH1</div>
<div class="c r" style="left:674px;top:603px;width:80px">10,000.00</div>
<div class="c l" style="left:754px;top:603px;width:80px">Standard</div>
<div class="c r" style="left:834px;top:603px;width:80px">0.00</div>
<div class="c r" style="left:914px;top:603px;width:80px">8,210.00</div>
<div class="c m" style="left:994px;top:603px;width:60px">admin</div>
<div class="th" style="left:28px;top:610px;width:4px"></div>
<div class="a" style="left:164px;top:365px;width:50px;height:14px;border:1px dotted #EFA13A"></div>
</div>
<div id="sb"></div>
<div class="a" style="left:1071px;top:231px;width:1px;height:381px;background:#94AACB"></div>
<div class="sbb" style="top:232px;height:14px"><svg class="a" style="left:2px;top:4px" width="9" height="7" viewBox="0 0 9 7"><path d="M0.8 5.8 L4.5 2 L8.2 5.8" stroke="#4D6185" stroke-width="2.2" fill="none"/></svg></div>
<div class="a" style="left:1056px;top:247px;width:15px;height:1px;background:#B8C9EE"></div>
<div id="thumb"><div class="a" style="left:3px;top:76px;width:7px;height:1px;background:#EEF4FE;box-shadow:0 2px 0 #EEF4FE,0 4px 0 #EEF4FE,0 6px 0 #EEF4FE,0 1px 0 #8CB0F8,0 3px 0 #8CB0F8,0 5px 0 #8CB0F8,0 7px 0 #8CB0F8"></div></div>
<div class="a" style="left:1056px;top:410px;width:15px;height:1px;background:#8FAEE8"></div>
<div class="sbb" style="top:596px;height:14px"><svg class="a" style="left:2px;top:4px" width="9" height="7" viewBox="0 0 9 7"><path d="M0.8 1.2 L4.5 5 L8.2 1.2" stroke="#4D6185" stroke-width="2.2" fill="none"/></svg></div>

<!-- context menu -->
<div id="menu"></div>
<div class="mi" style="top:355px">View Transaction Information...</div>
<div class="mi" style="top:373px">Edit Transaction Information...</div>
<div class="msep" style="top:391px"></div>
<div class="mi" style="top:400px">Copy All</div>
<div class="mi" style="top:418px">Copy Row</div>
<div class="mi" style="top:436px">Copy Cell</div>
<div class="msep" style="top:454px"></div>
<div class="mi" style="top:463px">Export Contents...</div>
</div></body></html>
